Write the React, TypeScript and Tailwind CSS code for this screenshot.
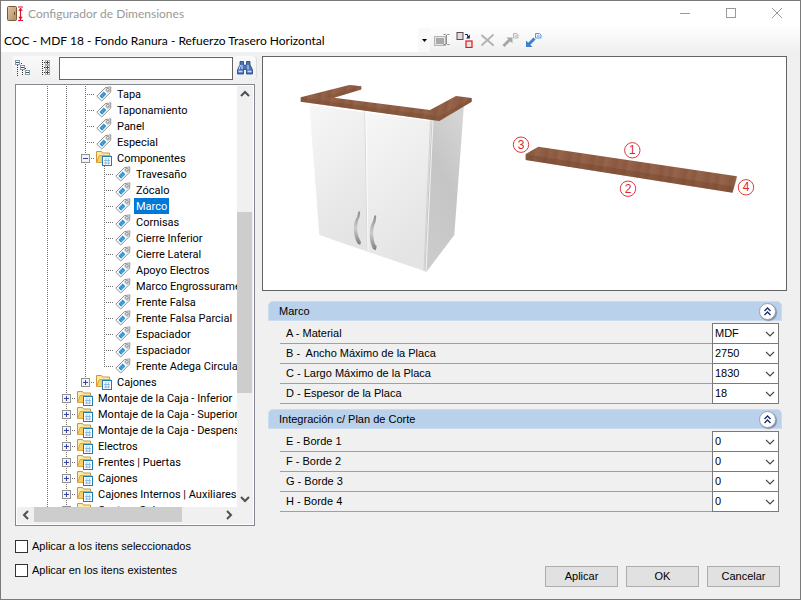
import type { ReactNode } from "react";

type Guide = "line" | "tee" | "end" | "plus" | "minus" | "plusEnd";

type TreeRow = {
  label: string;
  guides: Guide[];
  icon: "tag" | "folder";
  selected?: boolean;
};

const root: Guide[] = ["line", "line"];
const leaf = (label: string, last = false, selected = false): TreeRow => ({
  label,
  guides: [...root, "line", last ? "end" : "tee"],
  icon: "tag",
  selected,
});
const module = (label: string): TreeRow => ({ label, guides: ["line", "plus"], icon: "folder" });

const rows: TreeRow[] = [
  ...["Tapa", "Taponamiento", "Panel", "Especial"].map(
    (label): TreeRow => ({ label, guides: [...root, "tee"], icon: "tag" })
  ),
  { label: "Componentes", guides: [...root, "minus"], icon: "folder" },
  leaf("Travesaño"),
  leaf("Zócalo"),
  leaf("Marco", false, true),
  leaf("Cornisas"),
  leaf("Cierre Inferior"),
  leaf("Cierre Lateral"),
  leaf("Apoyo Electros"),
  leaf("Marco Engrossuramento"),
  leaf("Frente Falsa"),
  leaf("Frente Falsa Parcial"),
  leaf("Espaciador"),
  leaf("Espaciador"),
  leaf("Frente Adega Circular", true),
  { label: "Cajones", guides: [...root, "plusEnd"], icon: "folder" },
  module("Montaje de la Caja - Inferior"),
  module("Montaje de la Caja - Superior"),
  module("Montaje de la Caja - Despensa"),
  module("Electros"),
  module("Frentes | Puertas"),
  module("Cajones"),
  module("Cajones Internos | Auxiliares"),
  module("Costura Cola"),
];

function GuideCell({ kind }: { kind: Guide }) {
  const box = kind === "plus" || kind === "minus" || kind === "plusEnd";
  const stops = kind === "end" || kind === "plusEnd";
  return (
    <svg className="h-4 w-[19px] shrink-0" viewBox="0 0 19 16" shapeRendering="crispEdges" aria-hidden="true">
      <path d={stops ? "M9.5 0V8" : "M9.5 0V16"} stroke="#707070" strokeDasharray="1 1" />
      {kind !== "line" && <path d="M9 8.5H19" stroke="#707070" strokeDasharray="1 1" />}
      {box && (
        <>
          <rect x="5.5" y="4.5" width="8" height="8" fill="#f4f4f4" stroke="#919191" />
          <path d={kind === "minus" ? "M7 8.5H12" : "M7 8.5H12M9.5 6V11"} stroke="#33459c" />
        </>
      )}
    </svg>
  );
}

function TagIcon() {
  return (
    <svg className="h-4 w-4 shrink-0" viewBox="0 0 16 16" aria-hidden="true">
      <path d="M.8 10.2 9.4 1.6 14.8.9 14.6 6.2 5.8 15Z" fill="#fff" stroke="#8d8d8d" strokeLinejoin="round" />
      <path d="M9.6 2.2 14.2 1.4 14 5.9 11.8 7.4 8.8 4Z" fill="#d2d2d2" />
      <path d="M3.4 10 7.7 5.6 10.4 8.3 6.1 12.7Z" fill="#2b8fd0" />
      <path d="m5 8.6 2.6 2.7M6.4 7l2.7 2.8" stroke="#8cc7ee" strokeWidth=".6" />
      <circle cx="11.8" cy="3.8" r="1.3" fill="#fff" stroke="#777" strokeWidth=".8" />
    </svg>
  );
}

function FolderIcon() {
  return (
    <svg className="h-4 w-4 shrink-0" viewBox="0 0 16 16" aria-hidden="true">
      <path d="M.5 12.5V1.5H5.5L6.5 3H13.5V12.5Z" fill="#ffe9a6" stroke="#cf963c" />
      <path d="M.7 12.5 3.2 5.5H14.5L12.8 12.5Z" fill="#f9cf63" stroke="#dba544" />
      <rect x="6.5" y="6.5" width="9" height="9" fill="#fff" stroke="#1c7db5" />
      <path d="M8 8h6v1H8z" fill="#dceeff" />
      <path d="M8 10.5h6M8 13h6M9.8 8.5V14.5M12.4 8.5V14.5" stroke="#86b3dc" strokeWidth=".9" />
    </svg>
  );
}

function Chevron({ d }: { d: string }) {
  return (
    <svg className="h-3 w-3" viewBox="0 0 12 12" fill="none" aria-hidden="true">
      <path d={d} stroke="#505050" strokeWidth="2" />
    </svg>
  );
}

function Tree() {
  return (
    <div className="flex min-h-0 flex-1 flex-col border border-[#828790] bg-white p-px">
      <div className="flex min-h-0 flex-1">
        <ul role="tree" aria-label="Componentes" className="min-w-0 flex-1 overflow-hidden pl-[21px] font-['Roboto','Liberation_Sans',sans-serif]">
          {rows.map((row, i) => (
            <li key={i} role="treeitem" aria-selected={!!row.selected} className="flex h-4 items-center whitespace-nowrap">
              {row.guides.map((g, j) => (
                <GuideCell key={j} kind={g} />
              ))}
              <span className="flex pl-px">{row.icon === "tag" ? <TagIcon /> : <FolderIcon />}</span>
              <span className={`ml-[3px] px-[2px] pt-[2px] leading-[14px] ${row.selected ? "bg-[#0078d7] text-white" : ""}`}>
                {row.label}
              </span>
            </li>
          ))}
        </ul>
        <div className="flex w-[15px] flex-col items-center bg-[#f0f0f0]">
          <button aria-label="Subir" className="flex h-4 items-center"><Chevron d="M2 8 6 4l4 4" /></button>
          <div className="grow-[110]" />
          <div className="w-full grow-[181] bg-[#cdcdcd]" />
          <div className="grow-[98]" />
          <button aria-label="Bajar" className="flex h-4 items-center"><Chevron d="M2 4l4 4 4-4" /></button>
        </div>
        <div className="w-px bg-[#f0f0f0]" />
      </div>
      <div className="flex h-[17px] items-stretch bg-[#f0f0f0] pb-[2px] pr-4">
        <button aria-label="Izquierda" className="flex w-[17px] items-center justify-center"><Chevron d="M8 2 4 6l4 4" /></button>
        <div className="grow-[147] bg-[#cdcdcd]" />
        <div className="grow-[38]" />
        <button aria-label="Derecha" className="flex w-[17px] items-center justify-center"><Chevron d="M4 2l4 4-4 4" /></button>
      </div>
    </div>
  );
}

function Badge({ x, y, n }: { x: number; y: number; n: string }) {
  return (
    <g>
      <circle cx={x} cy={y} r="7.7" fill="#fff" stroke="#e2383d" strokeWidth="1" />
      <text x={x} y={y + 4} textAnchor="middle" fontSize="12" fill="#e0262c">{n}</text>
    </g>
  );
}

function Preview() {
  return (
    <div className="border border-[#646464] bg-white">
      <svg className="h-[233px] w-full" viewBox="263 57 523 233" role="img" aria-label="Marco">
        <defs>
          <linearGradient id="door" x1="0" y1="0" x2=".35" y2="1">
            <stop offset="0" stopColor="#f7f7f7" />
            <stop offset="1" stopColor="#e4e4e4" />
          </linearGradient>
          <linearGradient id="side" x1=".7" y1="0" x2=".3" y2="1">
            <stop offset="0" stopColor="#d4d4d4" />
            <stop offset=".45" stopColor="#c5c5c5" />
            <stop offset="1" stopColor="#cccccc" />
          </linearGradient>
          <linearGradient id="metal" x1="0" y1="0" x2="0" y2="1">
            <stop offset="0" stopColor="#8a8a8a" />
            <stop offset=".5" stopColor="#cdcdcd" />
            <stop offset="1" stopColor="#7c7c7c" />
          </linearGradient>
          <linearGradient id="grain" gradientUnits="userSpaceOnUse" x1="0" y1="0" x2="23" y2="4" spreadMethod="repeat">
            <stop offset="0" stopColor="#8f5e45" />
            <stop offset=".2" stopColor="#895840" />
            <stop offset=".35" stopColor="#926147" />
            <stop offset=".6" stopColor="#8a5941" />
            <stop offset=".75" stopColor="#956449" />
            <stop offset="1" stopColor="#8f5e45" />
          </linearGradient>
        </defs>
        <path d="M309.3 103 364.5 110 367 251.5 319.3 235Z" fill="url(#door)" />
        <path d="M365.3 110 431.5 119 424.3 271 367.3 251.5Z" fill="url(#door)" />
        <path d="M431.5 119 464 104 454.3 235 426.5 271.8 424.3 271Z" fill="url(#side)" />
        <path d="M309.5 104 364.5 111.5 431 120.5" fill="none" stroke="#fff" strokeWidth="1.5" />
        <path d="M364.8 111 367.2 251.5" stroke="#cfcfcf" strokeWidth=".8" />
        <path d="M366 111 368 251" stroke="#fff" strokeWidth=".8" />
        <path d="M430.5 120 424 271" stroke="#c8c8c8" strokeWidth=".7" />
        <path d="M433 120 426 271" stroke="#f2f2f2" strokeWidth="1" />
        <path d="M300.7 97.3 349.3 85 361.3 86.3V89.5L334 97.7 430 110 456 96 471.7 97.9V101.7L439.3 121 300.7 101.7Z" fill="url(#grain)" />
        <path d="M300.7 97.5V101.7L439.3 121 471.7 101.7V98.2L439 116.3Z" fill="#74452c" opacity=".3" />
        <path d="M349.3 85 361.3 86.3V89.5L334 97.7 326 96.5 356 87.5Z" fill="#784930" opacity=".25" />
        <path d="M358.5 211.5 360.2 211.5 359.6 217C356.5 222 356.5 234 359.5 239L361 242 360.2 245 357.5 243.5C352.5 234 353 223 357 217Z" fill="url(#metal)" />
        <path d="M374.5 215.5 376.3 215.5 375.6 222C372.5 227 372.5 239 375.5 245L376.8 246 375.8 250.3 373 249C368.3 239 369 228 373 221Z" fill="url(#metal)" />

        <path d="M525.7 154 538.3 146.8 737 176.2 732.5 192.7 525.7 160Z" fill="url(#grain)" />
        <path d="M525.7 154.3 733.5 186.5 737 177 736.3 180.5 732.5 192.7 525.7 160Z" fill="#6a3d26" opacity=".3" />
        <Badge x={521} y={144.7} n="3" />
        <Badge x={632.3} y={150.3} n="1" />
        <Badge x={628} y={188.7} n="2" />
        <Badge x={746} y={187.3} n="4" />
      </svg>
    </div>
  );
}

type Field = { id: string; label: string; value: string };

function Group({ title, fields }: { title: string; fields: Field[] }) {
  return (
    <section className="pl-[6px] pr-[5px]">
      <header className="flex h-5 items-center justify-between rounded-t-[5px] border border-[#c9dcf0] bg-[#b9d1ea] pl-[10px] pr-[5px]">
        <h2>{title}</h2>
        <button aria-label={`Contraer ${title}`} className="flex h-[17px] w-[17px] items-center justify-center rounded-full border border-[#98a2b4] bg-white shadow-[1px_1px_1px_#7f8ca3]">
          <svg className="h-[11px] w-[11px]" viewBox="0 0 11 11" fill="none" stroke="#1b2f66" strokeWidth="1.4" aria-hidden="true">
            <path d="M2.5 5 5.5 2 8.5 5M2.5 9 5.5 6 8.5 9" />
          </svg>
        </button>
      </header>
      <div className="pb-px pl-3 pr-[3px] pt-[2px]">
        {fields.map((f) => (
          <div key={f.id} className="-mb-px flex h-[21px] items-stretch">
            <label htmlFor={f.id} className="flex flex-1 items-center whitespace-pre border-b border-[#a0a0a0] pl-[6px]">
              {f.label}
            </label>
            <div className="relative w-[67px]">
              <select id={f.id} defaultValue={f.value} className="h-full w-full appearance-none rounded-none border border-[#7a7a7a] bg-white pb-[2px] pl-[2px] leading-4">
                <option>{f.value}</option>
              </select>
              <svg className="pointer-events-none absolute right-1 top-[6px] h-[9px] w-[10px]" viewBox="0 0 10 9" fill="none" stroke="#444" strokeWidth="1.1" aria-hidden="true">
                <path d="M1 3 5 7 9 3" />
              </svg>
            </div>
          </div>
        ))}
      </div>
    </section>
  );
}

function IconButton({ label, children }: { label: string; children: ReactNode }) {
  return (
    <button aria-label={label} className="flex h-4 w-[17px] items-center justify-center">
      {children}
    </button>
  );
}

function Check({ id, label }: { id: string; label: string }) {
  return (
    <div className="flex h-[13px] items-center gap-1">
      <input id={id} type="checkbox" className="h-[13px] w-[13px] appearance-none border border-[#333] bg-white checked:bg-[#0078d7]" />
      <label htmlFor={id}>{label}</label>
    </div>
  );
}

const caption = "font-['Lato','Open_Sans',sans-serif] text-[12px]";

export default function App() {
  return (
    <div className="flex h-screen min-h-[560px] flex-col border border-[#7a7a7a] bg-[#f0f0f0] font-['Liberation_Sans',Arial,sans-serif] text-[11px] leading-[13px] text-black">
      <div className="flex h-[27px] shrink-0 items-center justify-between bg-white pl-[6px] pr-[17px]">
        <div className="flex items-center gap-[5px] pb-[2px]">
          <svg className="h-4 w-4" viewBox="0 0 16 16" aria-hidden="true">
            <defs>
              <linearGradient id="leather" x1="0" y1="0" x2="1" y2="1">
                <stop offset="0" stopColor="#e2c9a6" />
                <stop offset="1" stopColor="#b08c62" />
              </linearGradient>
            </defs>
            <rect x=".5" y=".5" width="9" height="14" rx="1" fill="url(#leather)" stroke="#78593a" />
            <path d="M7.5 6v3" stroke="#6b4d30" />
            <path d="M11 1h5M11 14.5h5M13.5 2v12" stroke="#d9142b" strokeWidth="1.2" />
            <path d="m11.2 4.8 2.3-3 2.3 3ZM11.2 10.8l2.3 3 2.3-3Z" fill="#d9142b" />
          </svg>
          <h1 className={`${caption} leading-4 text-[#999]`}>Configurador de Dimensiones</h1>
        </div>
        <div className="flex items-center gap-[34px] pb-[3px]">
          <button aria-label="Minimizar">
            <svg className="h-3 w-3" viewBox="0 0 12 12" stroke="#999" aria-hidden="true"><path d="M1 6.5h10" /></svg>
          </button>
          <button aria-label="Maximizar">
            <svg className="h-3 w-3" viewBox="0 0 12 12" stroke="#999" fill="none" aria-hidden="true"><rect x="1.5" y="1.5" width="9" height="9" /></svg>
          </button>
          <button aria-label="Cerrar">
            <svg className="h-3 w-3" viewBox="0 0 12 12" stroke="#999" aria-hidden="true"><path d="m1 1 10 10M11 1 1 11" /></svg>
          </button>
        </div>
      </div>

      <div className="flex h-6 shrink-0 items-center bg-linear-to-b from-[#fdfdfd] to-[#f0f0f0]">
        <div className="relative h-full w-[429px] bg-white">
          <select aria-label="Configuración" className={`${caption} h-full w-full appearance-none bg-white pl-[3px] pt-px leading-6`}>
            <option>COC - MDF 18 - Fondo Ranura - Refuerzo Trasero Horizontal</option>
          </select>
          <span className="pointer-events-none absolute right-0 top-0 flex h-full w-3 items-center justify-center bg-[#f9f9f9]">
            <svg className="h-[3px] w-[5px]" viewBox="0 0 5 3" aria-hidden="true"><path d="M0 0h5L2.5 3Z" /></svg>
          </span>
        </div>
        <div className="ml-[3px] flex items-center gap-[6px]">
          <IconButton label="Renombrar">
            <svg className="h-4 w-[17px]" viewBox="0 0 17 16" fill="none" aria-hidden="true">
              <rect x="1.5" y="4.5" width="11" height="9" fill="#e6e6e6" stroke="#b4b4b4" />
              <path d="M3 6h8v6H3z" fill="#a9a9a9" />
              <path d="M10.5 2.5h2l1 .8 1-.8h2M10.5 12.5h2l1-.8 1 .8h2M13.5 3v9" stroke="#8c8c8c" />
            </svg>
          </IconButton>
          <IconButton label="Sustituir">
            <svg className="h-4 w-[17px]" viewBox="0 0 17 16" fill="none" aria-hidden="true">
              <rect x="1" y=".5" width="6" height="7" fill="#ddd" stroke="#5b4a50" />
              <path d="M9 2.5h2.5v2H13" stroke="#14245c" />
              <path d="M13.8 2.5v4H10Z" fill="#14245c" />
              <rect x="10" y="9" width="6" height="6.5" fill="#e8e4e4" stroke="#ee1111" strokeWidth="1.2" />
            </svg>
          </IconButton>
          <IconButton label="Eliminar">
            <svg className="h-4 w-[17px]" viewBox="0 0 17 16" fill="none" stroke="#b3b3b3" strokeLinecap="round" aria-hidden="true">
              <path d="M3 3.5 14 13" strokeWidth="2" />
              <path d="M14 3 3 13" strokeWidth="1.8" />
            </svg>
          </IconButton>
          <IconButton label="Exportar">
            <svg className="h-4 w-[17px]" viewBox="0 0 17 16" fill="none" aria-hidden="true">
              <path d="M1.5 14 7.5 8" stroke="#a6a6a6" strokeWidth="3" />
              <path d="M4.5 5.5H10.5V11.5Z" fill="#a6a6a6" />
              <path d="M11.5 1.5h3l1.5 1.5v3h-4.5Z" fill="#eee" stroke="#b8b8b8" />
              <path d="M13 4h2" stroke="#b0b0b0" />
            </svg>
          </IconButton>
          <IconButton label="Importar">
            <svg className="h-4 w-[17px]" viewBox="0 0 17 16" fill="none" aria-hidden="true">
              <path d="M3.5 12.5 9.5 6.5" stroke="#3f80d0" strokeWidth="3" />
              <path d="M1 8.5V15H7.5Z" fill="#3f80d0" />
              <path d="M10.5 1.5h4l1.5 1.5v3h-5.5Z" fill="#e8f2ff" stroke="#5b9ae6" />
              <path d="M12 4h2.5" stroke="#5b9ae6" />
            </svg>
          </IconButton>
        </div>
      </div>

      <div className="flex min-h-0 flex-1 gap-[5px] pl-[11px] pr-[13px] pt-1">
        <div className="flex w-[245px] shrink-0 flex-col">
          <div className="flex h-6 shrink-0 items-center rounded-sm border-r border-[#ddd] bg-linear-to-b from-[#fafafa] to-[#f0f0f0] pl-[3px]">
            <button aria-label="Contraer árbol" className="mr-[10px]">
              <svg className="h-4 w-4" viewBox="0 0 16 16" fill="none" shapeRendering="crispEdges" aria-hidden="true">
                <path d="M2.5 5V16M7.5 10V16M4 3.5h4M8 8.5h3" stroke="#333" strokeDasharray="1 1" />
                <rect x=".5" y=".5" width="4" height="4" fill="#fff" stroke="#8b9aa5" />
                <rect x="5.5" y="5.5" width="4" height="4" fill="#fff" stroke="#8b9aa5" />
                <rect x="10.5" y="10.5" width="4" height="4" fill="#fff" stroke="#8b9aa5" />
                <path d="M1 2.5h3M6 7.5h3M11 12.5h3" stroke="#356" />
              </svg>
            </button>
            <button aria-label="Expandir árbol" className="mr-2">
              <svg className="h-4 w-[10px]" viewBox="0 0 10 16" fill="none" shapeRendering="crispEdges" aria-hidden="true">
                <path d="M1.5 0V16M3 2.5h2M3 7.5h2M3 12.5h2" stroke="#333" strokeDasharray="1 1" />
                <rect x="4.5" y=".5" width="4" height="4" fill="#fff" stroke="#a3adb3" />
                <rect x="4.5" y="5.5" width="4" height="4" fill="#fff" stroke="#a3adb3" />
                <rect x="4.5" y="10.5" width="4" height="4" fill="#fff" stroke="#a3adb3" />
                <path d="M5 2.5h3M5 7.5h3M5 12.5h3M6.5 1v3M6.5 6v3M6.5 11v3" stroke="#3d474d" />
              </svg>
            </button>
            <input type="text" aria-label="Buscar" className="h-[23px] w-[174px] border border-[#646464] bg-white px-1" />
            <button aria-label="Buscar siguiente" className="ml-1">
              <svg className="h-4 w-4" viewBox="0 0 16 16" aria-hidden="true">
                <path d="M3 1.5h3.5V4L7.5 5.5h1L9.5 4V1.5H13V4.5L15.5 10v4H9.5V9.5h-3V14H.5V10L3 4.5Z" fill="#4c74b8" stroke="#203f7e" strokeWidth=".8" />
                <path d="M3.5 5 2 9.5M11 5v4.500M5 5v4" stroke="#d5e3fa" />
                <path d="M1.5 11.5h4M10.5 11.5h4" stroke="#c9dbf8" strokeWidth="1.6" />
              </svg>
            </button>
          </div>
          <div className="ml-[3px] mr-[2px] mt-1 flex min-h-0 flex-1 flex-col">
            <Tree />
          </div>
        </div>

        <main className="flex min-w-0 flex-1 flex-col">
          <Preview />
          <div className="flex flex-col gap-[5px] pt-[10px]">
            <Group
              title="Marco"
              fields={[
                { id: "a", label: "A - Material", value: "MDF" },
                { id: "b", label: "B -  Ancho Máximo de la Placa", value: "2750" },
                { id: "c", label: "C - Largo Máximo de la Placa", value: "1830" },
                { id: "d", label: "D - Espesor de la Placa", value: "18" },
              ]}
            />
            <Group
              title="Integración c/ Plan de Corte"
              fields={[
                { id: "e", label: "E - Borde 1", value: "0" },
                { id: "f", label: "F - Borde 2", value: "0" },
                { id: "g", label: "G - Borde 3", value: "0" },
                { id: "h", label: "H - Borde 4", value: "0" },
              ]}
            />
          </div>
        </main>
      </div>

      <footer className="flex shrink-0 items-end justify-between pb-3 pl-[14px] pr-5 pt-[14px]">
        <div className="flex flex-col gap-[11px] pb-[10px]">
          <Check id="selected" label="Aplicar a los itens seleccionados" />
          <Check id="existing" label="Aplicar en los itens existentes" />
        </div>
        <div className="flex gap-2">
          {["Aplicar", "OK", "Cancelar"].map((label) => (
            <button key={label} className="h-[21px] w-[73px] border border-[#adadad] bg-[#e1e1e1]">
              {label}
            </button>
          ))}
        </div>
      </footer>
    </div>
  );
}
